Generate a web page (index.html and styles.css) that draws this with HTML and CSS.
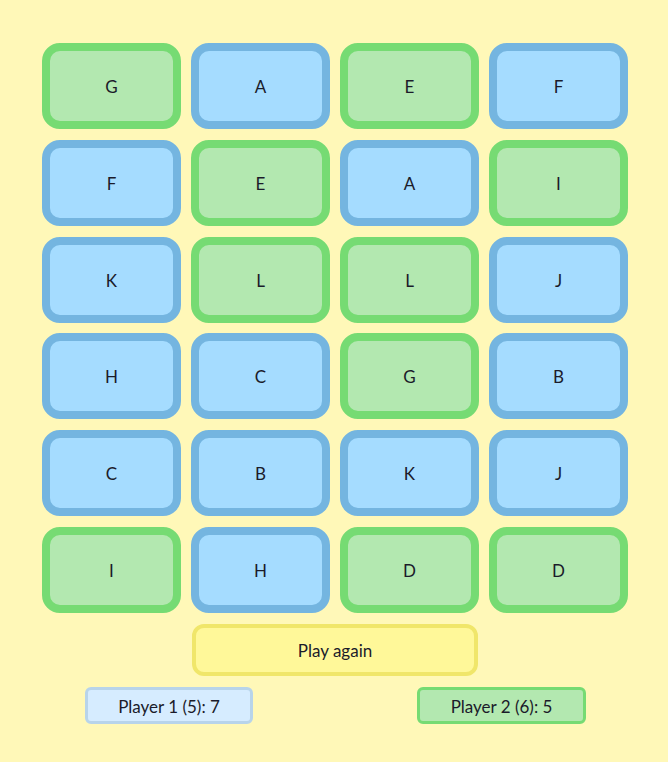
FILE: index.html
```html
<!DOCTYPE html>
<html>
<head>
<meta charset="utf-8">
<link rel="stylesheet" href="styles.css">
</head>
<body>
<div class="page">
  <div class="board">
    <div class="card green">G</div>
    <div class="card blue">A</div>
    <div class="card green">E</div>
    <div class="card blue">F</div>
    <div class="card blue">F</div>
    <div class="card green">E</div>
    <div class="card blue">A</div>
    <div class="card green">I</div>
    <div class="card blue">K</div>
    <div class="card green">L</div>
    <div class="card green">L</div>
    <div class="card blue">J</div>
    <div class="card blue">H</div>
    <div class="card blue">C</div>
    <div class="card green">G</div>
    <div class="card blue">B</div>
    <div class="card blue">C</div>
    <div class="card blue">B</div>
    <div class="card blue">K</div>
    <div class="card blue">J</div>
    <div class="card green">I</div>
    <div class="card blue">H</div>
    <div class="card green">D</div>
    <div class="card green">D</div>
  </div>
  <button class="again">Play again</button>
  <div class="scores">
    <div class="score p1">Player 1 (5): 7</div>
    <div class="score p2">Player 2 (6): 5</div>
  </div>
</div>
</body>
</html>
```
FILE: styles.css
```css
html, body {
  margin: 0;
  padding: 0;
  background: #fff8b8;
}
body {
  font-family: "Lato", "Noto Sans", sans-serif;
  color: #1b1b2a;
  width: 668px;
  height: 762px;
}
.page {
  display: flex;
  flex-direction: column;
  align-items: center;
  padding-top: 43px;
}
.board {
  display: grid;
  grid-template-columns: repeat(4, 138.5px);
  grid-auto-rows: 86px;
  column-gap: 10.5px;
  row-gap: 10.8px;
  margin-left: 2px;
}
.card {
  box-sizing: border-box;
  border: 8px solid;
  border-radius: 18px;
  display: flex;
  align-items: center;
  justify-content: center;
  font-size: 17px;
  padding-top: 1px;
}
.green {
  background: #b3e8b0;
  border-color: #76db73;
}
.blue {
  background: #a5dcff;
  border-color: #74b5e0;
}
.again {
  box-sizing: border-box;
  margin-top: 11px;
  margin-left: 2px;
  width: 286px;
  height: 52px;
  padding-top: 2px;
  background: #fff899;
  border: 4px solid #f0e66a;
  border-radius: 12px;
  font-family: inherit;
  font-size: 17px;
  color: #1b1b2a;
}
.scores {
  align-self: stretch;
  display: flex;
  justify-content: space-around;
  margin-top: 11px;
  padding-left: 3px;
}
.score {
  box-sizing: border-box;
  width: 168px;
  height: 37px;
  padding-top: 2px;
  border: 3px solid;
  border-radius: 6px;
  display: flex;
  align-items: center;
  justify-content: center;
  font-size: 17px;
}
.p1 {
  background: #d6ecff;
  border-color: #b8d4ea;
}
.p2 {
  width: 169px;
  background: #b3e8b0;
  border-color: #76db73;
}
```
